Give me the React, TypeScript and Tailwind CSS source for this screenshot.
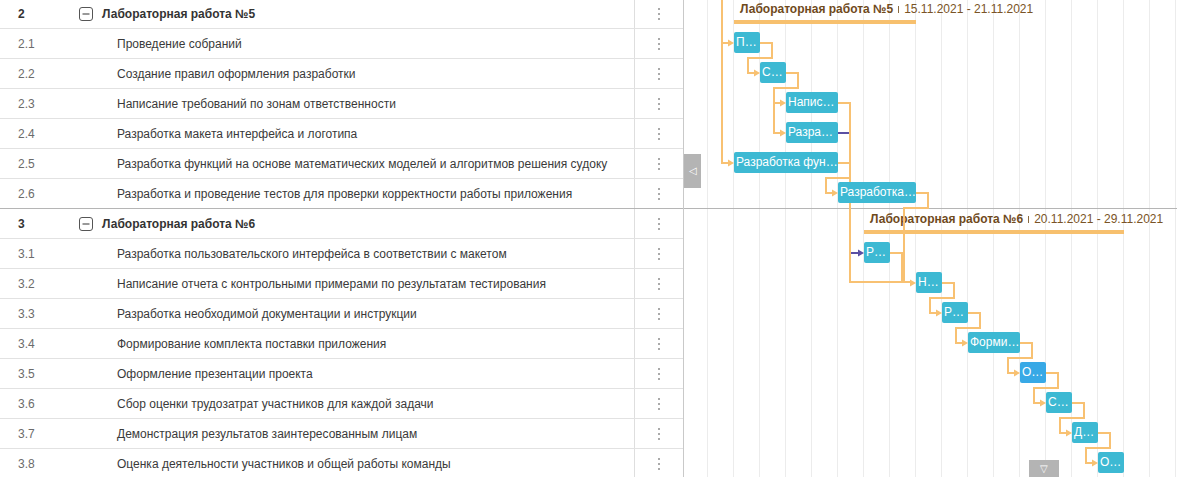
import React from "react";

type Row = { num: string; name: string; group?: boolean };

const rows: Row[] = [
  { num: "2", name: "Лабораторная работа №5", group: true },
  { num: "2.1", name: "Проведение собраний" },
  { num: "2.2", name: "Создание правил оформления разработки" },
  { num: "2.3", name: "Написание требований по зонам ответственности" },
  { num: "2.4", name: "Разработка макета интерфейса и логотипа" },
  { num: "2.5", name: "Разработка функций на основе математических моделей и алгоритмов решения судоку" },
  { num: "2.6", name: "Разработка и проведение тестов для проверки корректности работы приложения" },
  { num: "3", name: "Лабораторная работа №6", group: true },
  { num: "3.1", name: "Разработка пользовательского интерфейса в соответствии с макетом" },
  { num: "3.2", name: "Написание отчета с контрольными примерами по результатам тестирования" },
  { num: "3.3", name: "Разработка необходимой документации и инструкции" },
  { num: "3.4", name: "Формирование комплекта поставки приложения" },
  { num: "3.5", name: "Оформление презентации проекта" },
  { num: "3.6", name: "Сбор оценки трудозатрат участников для каждой задачи" },
  { num: "3.7", name: "Демонстрация результатов заинтересованным лицам" },
  { num: "3.8", name: "Оценка деятельности участников и общей работы команды" },
];

const GX = 684;
const cy = (i: number) => 13 + 30 * i;

type Task = { row: number; x: number; w: number; label: string; sel?: boolean };
const tasks: Task[] = [
  { row: 1, x: 734, w: 26, label: "П…" },
  { row: 2, x: 760, w: 26, label: "С…" },
  { row: 3, x: 786, w: 52, label: "Напис…" },
  { row: 4, x: 786, w: 52, label: "Разра…" },
  { row: 5, x: 734, w: 104, label: "Разработка фун…" },
  { row: 6, x: 838, w: 78, label: "Разработка…" },
  { row: 8, x: 864, w: 26, label: "Р…" },
  { row: 9, x: 916, w: 26, label: "Н…" },
  { row: 10, x: 942, w: 26, label: "Р…" },
  { row: 11, x: 968, w: 52, label: "Форми…" },
  { row: 12, x: 1020, w: 26, label: "О…", sel: true },
  { row: 13, x: 1046, w: 26, label: "С…" },
  { row: 14, x: 1072, w: 26, label: "Д…" },
  { row: 15, x: 1098, w: 26, label: "О…" },
];

const ORANGE = "#f8c172";
const PURPLE = "#5a4fa3";

function step(fromX: number, row: number, toX: number) {
  const y = cy(row);
  return `M${fromX},${y} H${fromX + 12} V${y + 15} H${toX - 12} V${y + 30} H${toX - 5}`;
}

const orangePaths: string[] = [
  "M722,-5 V163 H729",
  "M722,43 H729",
  step(760, 1, 760),
  step(786, 2, 786),
  "M774,88 V133 H781",
  "M838,103 H850 V178 H826 V193 H833",
  "M838,163 H850 V282 H911",
  "M916,193 H928 V208 H904 V282 H911",
  "M890,253 H902 V282",
  step(942, 9, 942),
  step(968, 10, 968),
  step(1020, 11, 1020),
  step(1046, 12, 1046),
  step(1072, 13, 1072),
  step(1098, 14, 1098),
];

const orangeArrows: [number, number][] = [
  [734, 43],
  [734, 163],
  [760, 73],
  [786, 103],
  [786, 133],
  [838, 193],
  [916, 283],
  [942, 313],
  [968, 343],
  [1020, 373],
  [1046, 403],
  [1072, 433],
  [1098, 463],
];

function Arrow({ x, y, color }: { x: number; y: number; color: string }) {
  return <polygon points={`${x},${y} ${x - 6},${y - 3.5} ${x - 6},${y + 3.5}`} fill={color} />;
}

function CollapseIcon() {
  return (
    <svg width="14" height="14" viewBox="0 0 14 14" className="shrink-0">
      <rect x="0.5" y="0.5" width="13" height="13" rx="2.5" fill="none" stroke="#555" strokeWidth="1" />
      <line x1="3.5" y1="7" x2="10.5" y2="7" stroke="#555" strokeWidth="1.2" />
    </svg>
  );
}

function Dots() {
  return (
    <div className="flex flex-col items-center gap-[3px]">
      <span className="block w-[2px] h-[2px] bg-[#aaaaaa]" />
      <span className="block w-[2px] h-[2px] bg-[#aaaaaa]" />
      <span className="block w-[2px] h-[2px] bg-[#aaaaaa]" />
    </div>
  );
}

function Project({ row, x, w, title, dates }: { row: number; x: number; w: number; title: string; dates: string }) {
  const y = cy(row);
  return (
    <>
      <div
        className="absolute flex items-center whitespace-nowrap text-[12px] leading-none"
        style={{ left: x - GX + 6, top: y - 10 }}
      >
        <span className="font-bold text-[#6f4a1c]">{title}</span>
        <span className="mx-[5px] w-px h-[7px] bg-[#8a6a40] inline-block" />
        <span className="text-[#7a5426]">{dates}</span>
      </div>
      <div className="absolute h-[4px] bg-[#f7c06e]" style={{ left: x - GX, top: y + 7, width: w }} />
    </>
  );
}

export default function App() {
  return (
    <div
      className="w-[1177px] h-[477px] overflow-hidden flex bg-white"
      style={{ fontFamily: '"Liberation Sans", Arial, sans-serif' }}
    >
      {/* Grid */}
      <div className="w-[684px] shrink-0 border-r border-[#c9c9c9] overflow-hidden">
        <div className="-mt-px">
          {rows.map((r, i) => (
            <div
              key={r.num}
              className={`flex h-[30px] border-b text-[12px] ${
                i === 6 ? "border-[#b5b5b5]" : "border-[#e2e2e2]"
              }`}
            >
              <div
                className={`w-[75px] shrink-0 flex items-center pl-[18px] ${
                  r.group ? "font-bold text-[#333333]" : "text-[#6b6b6b]"
                }`}
              >
                {r.num}
              </div>
              <div
                className={`w-[560px] shrink-0 border-r border-[#dedede] flex items-center whitespace-nowrap overflow-hidden ${
                  r.group ? "pl-[4px] gap-[9px] font-bold text-[#333333]" : "pl-[42px] text-[#3a3a3a]"
                }`}
              >
                {r.group && <CollapseIcon />}
                <span>{r.name}</span>
              </div>
              <div className="w-[48px] shrink-0 flex items-center justify-center">
                <Dots />
              </div>
            </div>
          ))}
        </div>
      </div>

      {/* Chart */}
      <div className="relative flex-1 h-full overflow-hidden">
        <div className="flex h-full">
          <div className="w-[24px] shrink-0 border-r border-[#ececec]" />
          {Array.from({ length: 18 }).map((_, k) => (
            <div key={k} className="w-[26px] shrink-0 border-r border-[#ececec]" />
          ))}
        </div>
        <div className="absolute left-0 right-0 top-[208px] h-px bg-[#b5b5b5]" />

        <Project row={0} x={734} w={182} title="Лабораторная работа №5" dates="15.11.2021 - 21.11.2021" />
        <Project row={7} x={864} w={260} title="Лабораторная работа №6" dates="20.11.2021 - 29.11.2021" />

        <svg className="absolute left-0 top-0" width={493} height={477}>
          <g transform={`translate(${-GX},0)`}>
            <path d="M838,133 H850 V253 H859" fill="none" stroke={PURPLE} strokeWidth={2} />
            {orangePaths.map((d, i) => (
              <path key={i} d={d} fill="none" stroke={ORANGE} strokeWidth={2} />
            ))}
            <path d="M838,133 H849" fill="none" stroke={PURPLE} strokeWidth={2} />
            <path d="M851,253 H859" fill="none" stroke={PURPLE} strokeWidth={2} />
            <Arrow x={864} y={253} color={PURPLE} />
            {orangeArrows.map(([x, y], i) => (
              <Arrow key={i} x={x} y={y} color={ORANGE} />
            ))}
          </g>
        </svg>

        {tasks.map((t, i) => (
          <div
            key={i}
            className={`absolute h-[21px] rounded-[2px] text-white text-[12px] leading-[21px] pl-[2px] whitespace-nowrap ${
              t.sel ? "bg-[#38a9e6]" : "bg-[#3db9d3]"
            }`}
            style={{ left: t.x - GX, top: cy(t.row) - 11, width: t.w }}
          >
            {t.label}
          </div>
        ))}

        <div className="absolute left-0 top-[154px] w-[17px] h-[34px] bg-[#b4b4b4] flex items-center justify-center text-white text-[10px] leading-none">
          ◁
        </div>
        <div className="absolute left-[345px] top-[460px] w-[30px] h-[17px] bg-[#b4b4b4] flex items-center justify-center text-white text-[10px] leading-none">
          ▽
        </div>
      </div>
    </div>
  );
}
